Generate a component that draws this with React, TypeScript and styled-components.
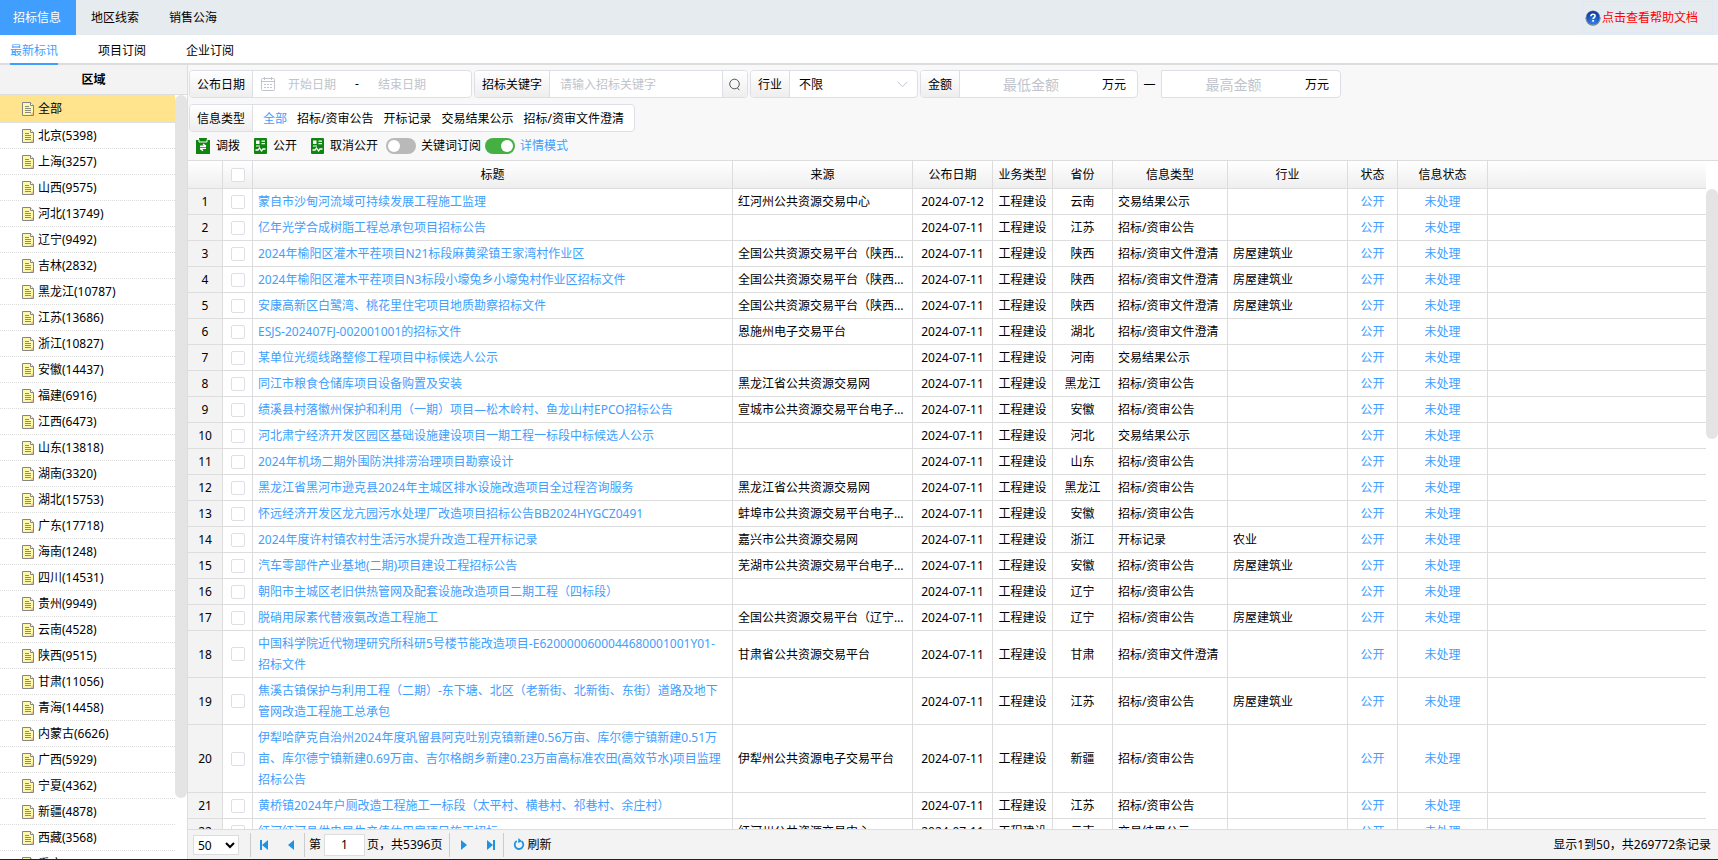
import React from 'react';
import styled, { createGlobalStyle } from 'styled-components';

const BLUE = '#409eff';
const LINE = '#dddddd';
const FIELD = '#dcdfe6';
const HINT = '#c0c4cc';
const GRADIENT = 'linear-gradient(#ffffff, #eeeeee)';

const GlobalStyle = createGlobalStyle`
  *, *::before, *::after { box-sizing: border-box; }
  body { margin: 0; }
  body, button, input, select {
    font-family: "Noto Sans", "Noto Sans CJK SC", sans-serif;
    font-size: 12px;
    line-height: 20px;
    color: #000;
  }
  button { border: 0; background: none; padding: 0; cursor: pointer; }
  a { color: ${BLUE}; text-decoration: none; }
`;

const Page = styled.div`
  display: flex;
  flex-direction: column;
  height: 100vh;
  overflow: hidden;
  background: #fff;
  border-bottom: 1px solid #222;
`;

const TopBar = styled.header`
  display: flex;
  flex: none;
  align-items: stretch;
  height: 35px;
  background: #e6ebef;
`;

const TopTab = styled.button<{ $active?: boolean }>`
  padding: 0 15px 0 ${p => (p.$active ? 13 : 15)}px;
  background: ${p => (p.$active ? BLUE : 'transparent')};
  color: ${p => (p.$active ? '#fff' : '#000')};
`;

const HelpLink = styled.a`
  display: flex;
  align-items: center;
  gap: 1px;
  margin: 1px 5px 2px auto;
  padding: 2px 14px 0 2px;
  border: 1px solid #e0e8f6;
  color: #f00;
`;

const SubBar = styled.nav`
  display: flex;
  flex: none;
  gap: 40px;
  height: 30px;
  padding-left: 10px;
  background: linear-gradient(${LINE}, ${LINE}) bottom / 100% 2px no-repeat;
`;

const SubTab = styled.button<{ $active?: boolean }>`
  padding-top: 3px;
  border-bottom: 2px solid ${p => (p.$active ? BLUE : 'transparent')};
  color: ${p => (p.$active ? BLUE : '#000')};
`;

const Body = styled.div`
  display: flex;
  flex: 1;
  min-height: 0;
`;

const Sidebar = styled.aside`
  display: flex;
  flex: none;
  flex-direction: column;
  width: 188px;
  border-right: 1px solid ${LINE};
`;

const SidebarTitle = styled.h2`
  flex: none;
  height: 30px;
  margin: 0;
  border-bottom: 1px solid ${LINE};
  background: #f3f3f3;
  font-size: 12px;
  line-height: 29px;
  text-align: center;
`;

const Scroller = styled.div`
  display: flex;
  flex: 1;
  min-height: 0;
`;

const RegionList = styled.ul`
  flex: 1;
  margin: 0;
  padding: 0;
  overflow: hidden;
  list-style: none;
`;

const Region = styled.li<{ $active?: boolean }>`
  display: flex;
  align-items: center;
  gap: 4px;
  height: ${p => (p.$active ? 28 : 26)}px;
  padding-left: 22px;
  border-bottom: 1px dotted ${LINE};
  background: ${p => (p.$active ? '#ffe48d' : 'transparent')};
`;

const Rail = styled.div<{ $head?: boolean }>`
  flex: none;
  width: 12px;
  padding-top: ${p => (p.$head ? 28 : 0)}px;
`;

const Thumb = styled.div<{ $share: number }>`
  height: ${p => p.$share}%;
  border-radius: 6px;
  background: #e4e4e4;
`;

const Main = styled.main`
  display: flex;
  flex: 1;
  flex-direction: column;
  min-width: 0;
`;

const Tools = styled.section`
  display: flex;
  flex: none;
  flex-direction: column;
  gap: 6px;
  padding: 5px 1px 6px;
  border-bottom: 1px solid ${LINE};
  background: #f8f8f8;
`;

const FilterRow = styled.div`
  display: flex;
  align-items: center;
  gap: 2px;
`;

const Group = styled.div<{ $width?: number; $square?: boolean }>`
  display: flex;
  width: ${p => (p.$width ? p.$width + 'px' : 'auto')};
  height: 28px;
  overflow: hidden;
  border: 1px solid ${FIELD};
  border-radius: ${p => (p.$square ? '0 4px 4px 0' : '4px')};
  background: #fff;
`;

const GroupLabel = styled.label`
  display: flex;
  flex: none;
  align-items: center;
  padding: 1px 7px 0;
  border-right: 1px solid ${FIELD};
  background: ${GRADIENT};
`;

const GroupText = styled(GroupLabel).attrs({ as: 'span' })``;

const Field = styled.input<{ $large?: boolean }>`
  flex: 1;
  min-width: 0;
  padding: 1px ${p => (p.$large ? 0 : 10)}px 0;
  border: 0;
  outline: 0;
  background: transparent;
  font-size: ${p => (p.$large ? 14 : 12)}px;
  text-align: ${p => (p.$large ? 'center' : 'left')};
  &::placeholder { color: ${HINT}; opacity: 1; }
`;

const DateRange = styled.div`
  display: flex;
  flex: 1;
  align-items: center;
  min-width: 0;
  padding-left: 8px;
`;

const DateField = styled.input`
  width: 74px;
  padding: 1px 0 0;
  border: 0;
  outline: 0;
  background: transparent;
  text-align: center;
  &::placeholder { color: ${HINT}; opacity: 1; }
`;

const DateDash = styled.span`
  width: 16px;
  text-align: center;
`;

const SearchButton = styled.button`
  display: flex;
  align-items: center;
  justify-content: center;
  width: 25px;
  border-left: 1px solid ${FIELD};
  background: ${GRADIENT};
`;

const SelectWrap = styled.div`
  display: flex;
  flex: 1;
  align-items: center;
  padding-right: 9px;
`;

const Select = styled.select`
  flex: 1;
  padding: 1px 0 0 9px;
  border: 0;
  outline: 0;
  appearance: none;
  background: transparent;
`;

const Unit = styled.span`
  padding: 4px 11px 0 0;
`;

const RangeDash = styled.span`
  width: 19px;
  text-align: center;
`;

const TypeList = styled.div`
  display: flex;
  align-items: center;
  gap: 10px;
  padding: 1px 10px 0;
`;

const TypeButton = styled.button<{ $active?: boolean }>`
  color: ${p => (p.$active ? BLUE : '#000')};
`;

const ActionRow = styled.div`
  display: flex;
  align-items: center;
  height: 16px;
  padding-left: 7px;
`;

const Action = styled.button`
  display: flex;
  align-items: center;
  gap: 6px;
  margin-right: 14px;
  &:nth-of-type(3) { margin-right: 8px; }
`;

const SwitchLabel = styled.label<{ $active?: boolean }>`
  display: flex;
  align-items: center;
  gap: 5px;
  margin-right: 4px;
  color: ${p => (p.$active ? BLUE : '#000')};
`;

const Switch = styled.input`
  display: flex;
  align-items: center;
  width: 30px;
  height: 16px;
  margin: 0;
  padding: 2px;
  border-radius: 8px;
  appearance: none;
  background: #b9b9b9;
  &::before {
    content: '';
    width: 12px;
    height: 12px;
    border-radius: 50%;
    background: #fff;
  }
  &:checked { justify-content: flex-end; background: #44b044; }
`;

const Viewport = styled.div`
  flex: 1;
  min-width: 0;
  overflow: hidden;
`;

const Table = styled.table`
  width: 100%;
  border-collapse: separate;
  border-spacing: 0;
  table-layout: fixed;
`;

const Col = styled.col<{ $width?: number }>`
  width: ${p => (p.$width ? p.$width + 'px' : 'auto')};
`;

const HeadRow = styled.tr`
  background: ${GRADIENT};
`;

const HeadCell = styled.th`
  height: 28px;
  padding: 0;
  border-right: 1px solid ${LINE};
  border-bottom: 1px solid ${LINE};
  font-weight: normal;
  line-height: 21px;
  white-space: nowrap;
  &:last-child { border-right: 0; }
`;

const Cell = styled.td<{ $center?: boolean; $gray?: boolean; $wrap?: boolean }>`
  padding: 2px ${p => (p.$center ? 0 : p.$wrap ? 8 : 5)}px 2px ${p => (p.$center ? 0 : 5)}px;
  overflow: hidden;
  border-right: 1px solid ${LINE};
  border-bottom: 1px solid ${LINE};
  background: ${p => (p.$gray ? '#f3f3f3' : 'transparent')};
  line-height: 21px;
  text-align: ${p => (p.$center ? 'center' : 'left')};
  text-overflow: ellipsis;
  white-space: ${p => (p.$wrap ? 'normal' : 'nowrap')};
  vertical-align: middle;
  &:last-child { border-right: 0; }
`;

const Check = styled.input`
  display: block;
  width: 14px;
  height: 14px;
  margin: 0 auto;
  appearance: none;
  border: 1px solid ${FIELD};
  border-radius: 2px;
  background: #fff;
  &:checked { background: ${BLUE}; }
`;

const Pager = styled.footer`
  display: flex;
  flex: none;
  align-items: center;
  height: 30px;
  padding: 0 7px 0 5px;
  border-top: 1px solid ${LINE};
  background: #f3f3f3;
`;

const PageSize = styled.select`
  width: 46px;
  height: 20px;
  margin-right: 11px;
  padding: 0;
  border: 1px solid ${LINE};
  background: #fff;
`;

const Divider = styled.span`
  width: 1px;
  height: 24px;
  margin-right: 1px;
  background: #ccc;
`;

const PageButton = styled.button`
  display: flex;
  align-items: center;
  justify-content: center;
  width: 26px;
  height: 24px;
`;

const PageInput = styled.input`
  width: 41px;
  height: 22px;
  margin: 0 2px 0 3px;
  padding: 0;
  border: 1px solid ${LINE};
  text-align: center;
`;

const PageLabel = styled.label`
  display: flex;
  align-items: center;
  padding: 0 7px 0 3px;
`;

const Refresh = styled.button`
  display: flex;
  align-items: center;
  gap: 2px;
  padding: 0 8px;
`;

const Summary = styled.span`
  margin-left: auto;
`;

const HelpIcon = () => (
  <svg width="16" height="16" viewBox="0 0 16 16" aria-hidden="true">
    <defs>
      <radialGradient id="help" cx="50%" cy="80%" r="75%">
        <stop offset="0" stopColor="#2f86ee" />
        <stop offset="1" stopColor="#0b3a9c" />
      </radialGradient>
    </defs>
    <circle cx="8" cy="8.3" r="7.5" fill="#777" />
    <circle cx="8" cy="7.7" r="7.2" fill="#8fa3c4" />
    <circle cx="8" cy="7.8" r="6.7" fill="url(#help)" />
    <path d="M5.9 6.3c0-2.8 4.2-2.7 4.2-.3 0 1.5-2 1.5-2 3" fill="none" stroke="#fff" strokeWidth="1.6" />
    <rect x="7.2" y="10" width="1.8" height="1.6" fill="#fff" />
  </svg>
);

const FileIcon = () => (
  <svg width="12" height="14" viewBox="0 0 12 14" aria-hidden="true">
    <path d="M.5.5h8l3 3v10H.5z" fill="#fdf9a6" stroke="#858585" />
    <path d="M8.5.5v3h3" fill="#fff" stroke="#858585" />
    <path d="M3 4.5h4M3 6.5h6M3 8.5h6M3 10.5h6" stroke="#8a8a7a" />
    <path d="M8 13l3-3v3z" fill="#f3c08c" />
  </svg>
);

const CalendarIcon = () => (
  <svg width="14" height="14" viewBox="0 0 14 14" fill="none" stroke={HINT} aria-hidden="true">
    <rect x=".5" y="1.5" width="13" height="12" rx="1" />
    <path d="M.5 4.5h13M3.5 0v3M10.5 0v3M3 7.5h2M6 7.5h2M9 7.5h2M3 10.5h2M6 10.5h2M9 10.5h2" />
  </svg>
);

const SearchIcon = () => (
  <svg width="12" height="13" viewBox="0 0 12 13" fill="none" stroke="#555" aria-hidden="true">
    <circle cx="5.5" cy="6" r="4.8" />
    <path d="M8.5 10l1.8 2.2" />
  </svg>
);

const ChevronIcon = () => (
  <svg width="11" height="7" viewBox="0 0 11 7" fill="none" stroke={HINT} aria-hidden="true">
    <path d="M.5.7l5 5 5-5" />
  </svg>
);

const TransferIcon = () => (
  <svg width="14" height="16" viewBox="0 0 14 16" aria-hidden="true">
    <path d="M0 2h3V0h8v2h3v14H0z" fill="#108410" />
    <path d="M3 1.500v2.500h8V1.500" fill="none" stroke="#f8f8f8" />
    <path d="M4 8.200h6M7 6l3 2.200M4 10.400h6M7 12.600l-3-2.200" fill="none" stroke="#fff" strokeWidth="1.400" />
  </svg>
);

const PublishIcon = () => (
  <svg width="13" height="16" viewBox="0 0 13 16" aria-hidden="true">
    <rect width="13" height="16" rx="1" fill="#108410" />
    <rect x="2" y="2.500" width="3.500" height="3.500" fill="#fff" />
    <path d="M7.500 3.200H11M7.500 5.700H11M2 8H6" stroke="#fff" strokeWidth="1.200" />
    <path d="M1.500 12H4l1.500-2 2 3 1.500-2h2.500" fill="none" stroke="#fff" strokeWidth="1.300" />
  </svg>
);

const ArrowIcon = ({ back, edge }: { back?: boolean; edge?: boolean }) => (
  <svg width="10" height="12" viewBox="0 0 10 12" fill="#1e93e4" aria-hidden="true">
    {back ? <path d="M8 1v10L2 6z" /> : <path d="M2 1v10l6-5z" />}
    {edge && <rect x={back ? 0 : 8} y="1" width="2" height="10" />}
  </svg>
);

const RefreshIcon = () => (
  <svg width="12" height="13" viewBox="0 0 12 13" fill="none" stroke="#1e93e4" strokeWidth="1.800" aria-hidden="true">
    <path d="M8.500 3.200A4.300 4.300 0 1 1 3.800 3" />
    <path d="M5.500 0L9 3.200 5 5z" fill="#1e93e4" stroke="none" />
  </svg>
);

const regions = [
  '全部', '北京(5398)', '上海(3257)', '山西(9575)', '河北(13749)', '辽宁(9492)', '吉林(2832)',
  '黑龙江(10787)', '江苏(13686)', '浙江(10827)', '安徽(14437)', '福建(6916)', '江西(6473)',
  '山东(13818)', '湖南(3320)', '湖北(15753)', '广东(17718)', '海南(1248)', '四川(14531)',
  '贵州(9949)', '云南(4528)', '陕西(9515)', '甘肃(11056)', '青海(14458)', '内蒙古(6626)',
  '广西(5929)', '宁夏(4362)', '新疆(4878)', '西藏(3568)', '重庆(5120)',
];

const RESULT = '交易结果公示';
const NOTICE = '招标/资审公告';
const CLARIFY = '招标/资审文件澄清';
const HOUSING = '房屋建筑业';

type Row = [title: string, source: string, province: string, kind: string, trade: string];

const rows: Row[] = [
  ['蒙自市沙甸河流域可持续发展工程施工监理', '红河州公共资源交易中心', '云南', RESULT, ''],
  ['亿年光学合成树脂工程总承包项目招标公告', '', '江苏', NOTICE, ''],
  ['2024年榆阳区灌木平茬项目N21标段麻黄梁镇王家湾村作业区', '全国公共资源交易平台（陕西省）', '陕西', CLARIFY, HOUSING],
  ['2024年榆阳区灌木平茬项目N3标段小壕兔乡小壕兔村作业区招标文件', '全国公共资源交易平台（陕西省）', '陕西', CLARIFY, HOUSING],
  ['安康高新区白鹭湾、桃花里住宅项目地质勘察招标文件', '全国公共资源交易平台（陕西省）', '陕西', CLARIFY, HOUSING],
  ['ESJS-202407FJ-002001001的招标文件', '恩施州电子交易平台', '湖北', CLARIFY, ''],
  ['某单位光缆线路整修工程项目中标候选人公示', '', '河南', RESULT, ''],
  ['同江市粮食仓储库项目设备购置及安装', '黑龙江省公共资源交易网', '黑龙江', NOTICE, ''],
  ['绩溪县村落徽州保护和利用（一期）项目—松木岭村、鱼龙山村EPCO招标公告', '宣城市公共资源交易平台电子服务系统', '安徽', NOTICE, ''],
  ['河北肃宁经济开发区园区基础设施建设项目一期工程一标段中标候选人公示', '', '河北', RESULT, ''],
  ['2024年机场二期外围防洪排涝治理项目勘察设计', '', '山东', NOTICE, ''],
  ['黑龙江省黑河市逊克县2024年主城区排水设施改造项目全过程咨询服务', '黑龙江省公共资源交易网', '黑龙江', NOTICE, ''],
  ['怀远经济开发区龙亢园污水处理厂改造项目招标公告BB2024HYGCZ0491', '蚌埠市公共资源交易平台电子服务系统', '安徽', NOTICE, ''],
  ['2024年度许村镇农村生活污水提升改造工程开标记录', '嘉兴市公共资源交易网', '浙江', '开标记录', '农业'],
  ['汽车零部件产业基地(二期)项目建设工程招标公告', '芜湖市公共资源交易平台电子服务系统', '安徽', NOTICE, HOUSING],
  ['朝阳市主城区老旧供热管网及配套设施改造项目二期工程（四标段）', '', '辽宁', NOTICE, ''],
  ['脱硝用尿素代替液氨改造工程施工', '全国公共资源交易平台（辽宁省）', '辽宁', NOTICE, HOUSING],
  ['中国科学院近代物理研究所科研5号楼节能改造项目-E6200000600044680001001Y01-招标文件', '甘肃省公共资源交易平台', '甘肃', CLARIFY, ''],
  ['焦溪古镇保护与利用工程（二期）-东下塘、北区（老新街、北新街、东街）道路及地下管网改造工程施工总承包', '', '江苏', NOTICE, HOUSING],
  ['伊犁哈萨克自治州2024年度巩留县阿克吐别克镇新建0.56万亩、库尔德宁镇新建0.51万亩、库尔德宁镇新建0.69万亩、吉尔格朗乡新建0.23万亩高标准农田(高效节水)项目监理招标公告', '伊犁州公共资源电子交易平台', '新疆', NOTICE, ''],
  ['黄桥镇2024年户厕改造工程施工一标段（太平村、横巷村、祁巷村、余庄村）', '', '江苏', NOTICE, ''],
  ['红河红河县供电局生产值休用房项目施工招标', '红河州公共资源交易中心', '云南', RESULT, ''],
];

const widths = [35, 30, 480, 180, 80, 60, 60, 115, 120, 50, 90, undefined];
const headings = ['标题', '来源', '公布日期', '业务类型', '省份', '信息类型', '行业', '状态', '信息状态'];
const types = ['全部', NOTICE, '开标记录', RESULT, CLARIFY];

export default function App() {
  return (
    <Page>
      <GlobalStyle />
      <TopBar>
        <TopTab $active>招标信息</TopTab>
        <TopTab>地区线索</TopTab>
        <TopTab>销售公海</TopTab>
        <HelpLink href="#help"><HelpIcon />点击查看帮助文档</HelpLink>
      </TopBar>
      <SubBar>
        <SubTab $active>最新标讯</SubTab>
        <SubTab>项目订阅</SubTab>
        <SubTab>企业订阅</SubTab>
      </SubBar>
      <Body>
        <Sidebar>
          <SidebarTitle>区域</SidebarTitle>
          <Scroller>
            <RegionList>
              {regions.map((name, i) => (
                <Region key={name} $active={i === 0}><FileIcon />{name}</Region>
              ))}
            </RegionList>
            <Rail><Thumb $share={92} /></Rail>
          </Scroller>
        </Sidebar>
        <Main>
          <Tools>
            <FilterRow>
              <Group $width={283}>
                <GroupLabel htmlFor="from">公布日期</GroupLabel>
                <DateRange>
                  <CalendarIcon />
                  <DateField id="from" placeholder="开始日期" />
                  <DateDash>-</DateDash>
                  <DateField aria-label="结束日期" placeholder="结束日期" />
                </DateRange>
              </Group>
              <Group $width={274}>
                <GroupLabel htmlFor="keyword">招标关键字</GroupLabel>
                <Field id="keyword" placeholder="请输入招标关键字" />
                <SearchButton aria-label="搜索"><SearchIcon /></SearchButton>
              </Group>
              <Group $width={168}>
                <GroupLabel htmlFor="trade">行业</GroupLabel>
                <SelectWrap>
                  <Select id="trade" defaultValue="不限">
                    <option>不限</option>
                    <option>{HOUSING}</option>
                    <option>农业</option>
                  </Select>
                  <ChevronIcon />
                </SelectWrap>
              </Group>
              <Group $width={218}>
                <GroupLabel htmlFor="min">金额</GroupLabel>
                <Field id="min" $large placeholder="最低金额" />
                <Unit>万元</Unit>
              </Group>
              <RangeDash>—</RangeDash>
              <Group $width={180} $square>
                <Field aria-label="最高金额" $large placeholder="最高金额" />
                <Unit>万元</Unit>
              </Group>
            </FilterRow>
            <FilterRow>
              <Group>
                <GroupText>信息类型</GroupText>
                <TypeList>
                  {types.map((t, i) => <TypeButton key={t} $active={i === 0}>{t}</TypeButton>)}
                </TypeList>
              </Group>
            </FilterRow>
            <ActionRow>
              <Action><TransferIcon />调拨</Action>
              <Action><PublishIcon />公开</Action>
              <Action><PublishIcon />取消公开</Action>
              <SwitchLabel><Switch type="checkbox" role="switch" />关键词订阅</SwitchLabel>
              <SwitchLabel $active><Switch type="checkbox" role="switch" defaultChecked />详情模式</SwitchLabel>
            </ActionRow>
          </Tools>
          <Scroller>
            <Viewport>
              <Table>
                <colgroup>{widths.map((w, i) => <Col key={i} $width={w} />)}</colgroup>
                <thead>
                  <HeadRow>
                    <HeadCell />
                    <HeadCell><Check type="checkbox" aria-label="全选" /></HeadCell>
                    {headings.map(h => <HeadCell key={h}>{h}</HeadCell>)}
                    <HeadCell />
                  </HeadRow>
                </thead>
                <tbody>
                  {rows.map(([title, source, province, kind, trade], i) => (
                    <tr key={title}>
                      <Cell $center $gray>{i + 1}</Cell>
                      <Cell $center><Check type="checkbox" aria-label={title} /></Cell>
                      <Cell $wrap><a href="#detail">{title}</a></Cell>
                      <Cell>{source}</Cell>
                      <Cell $center>{i === 0 ? '2024-07-12' : '2024-07-11'}</Cell>
                      <Cell $center>工程建设</Cell>
                      <Cell $center>{province}</Cell>
                      <Cell>{kind}</Cell>
                      <Cell>{trade}</Cell>
                      <Cell $center><a href="#open">公开</a></Cell>
                      <Cell $center><a href="#handle">未处理</a></Cell>
                      <Cell />
                    </tr>
                  ))}
                </tbody>
              </Table>
            </Viewport>
            <Rail $head><Thumb $share={39} /></Rail>
          </Scroller>
          <Pager>
            <PageSize aria-label="每页条数" defaultValue="50">
              <option>50</option>
              <option>100</option>
            </PageSize>
            <Divider />
            <PageButton aria-label="首页"><ArrowIcon back edge /></PageButton>
            <PageButton aria-label="上一页"><ArrowIcon back /></PageButton>
            <Divider />
            <PageLabel>第<PageInput defaultValue="1" />页，共5396页</PageLabel>
            <Divider />
            <PageButton aria-label="下一页"><ArrowIcon /></PageButton>
            <PageButton aria-label="末页"><ArrowIcon edge /></PageButton>
            <Divider />
            <Refresh><RefreshIcon />刷新</Refresh>
            <Summary>显示1到50，共269772条记录</Summary>
          </Pager>
        </Main>
      </Body>
    </Page>
  );
}
